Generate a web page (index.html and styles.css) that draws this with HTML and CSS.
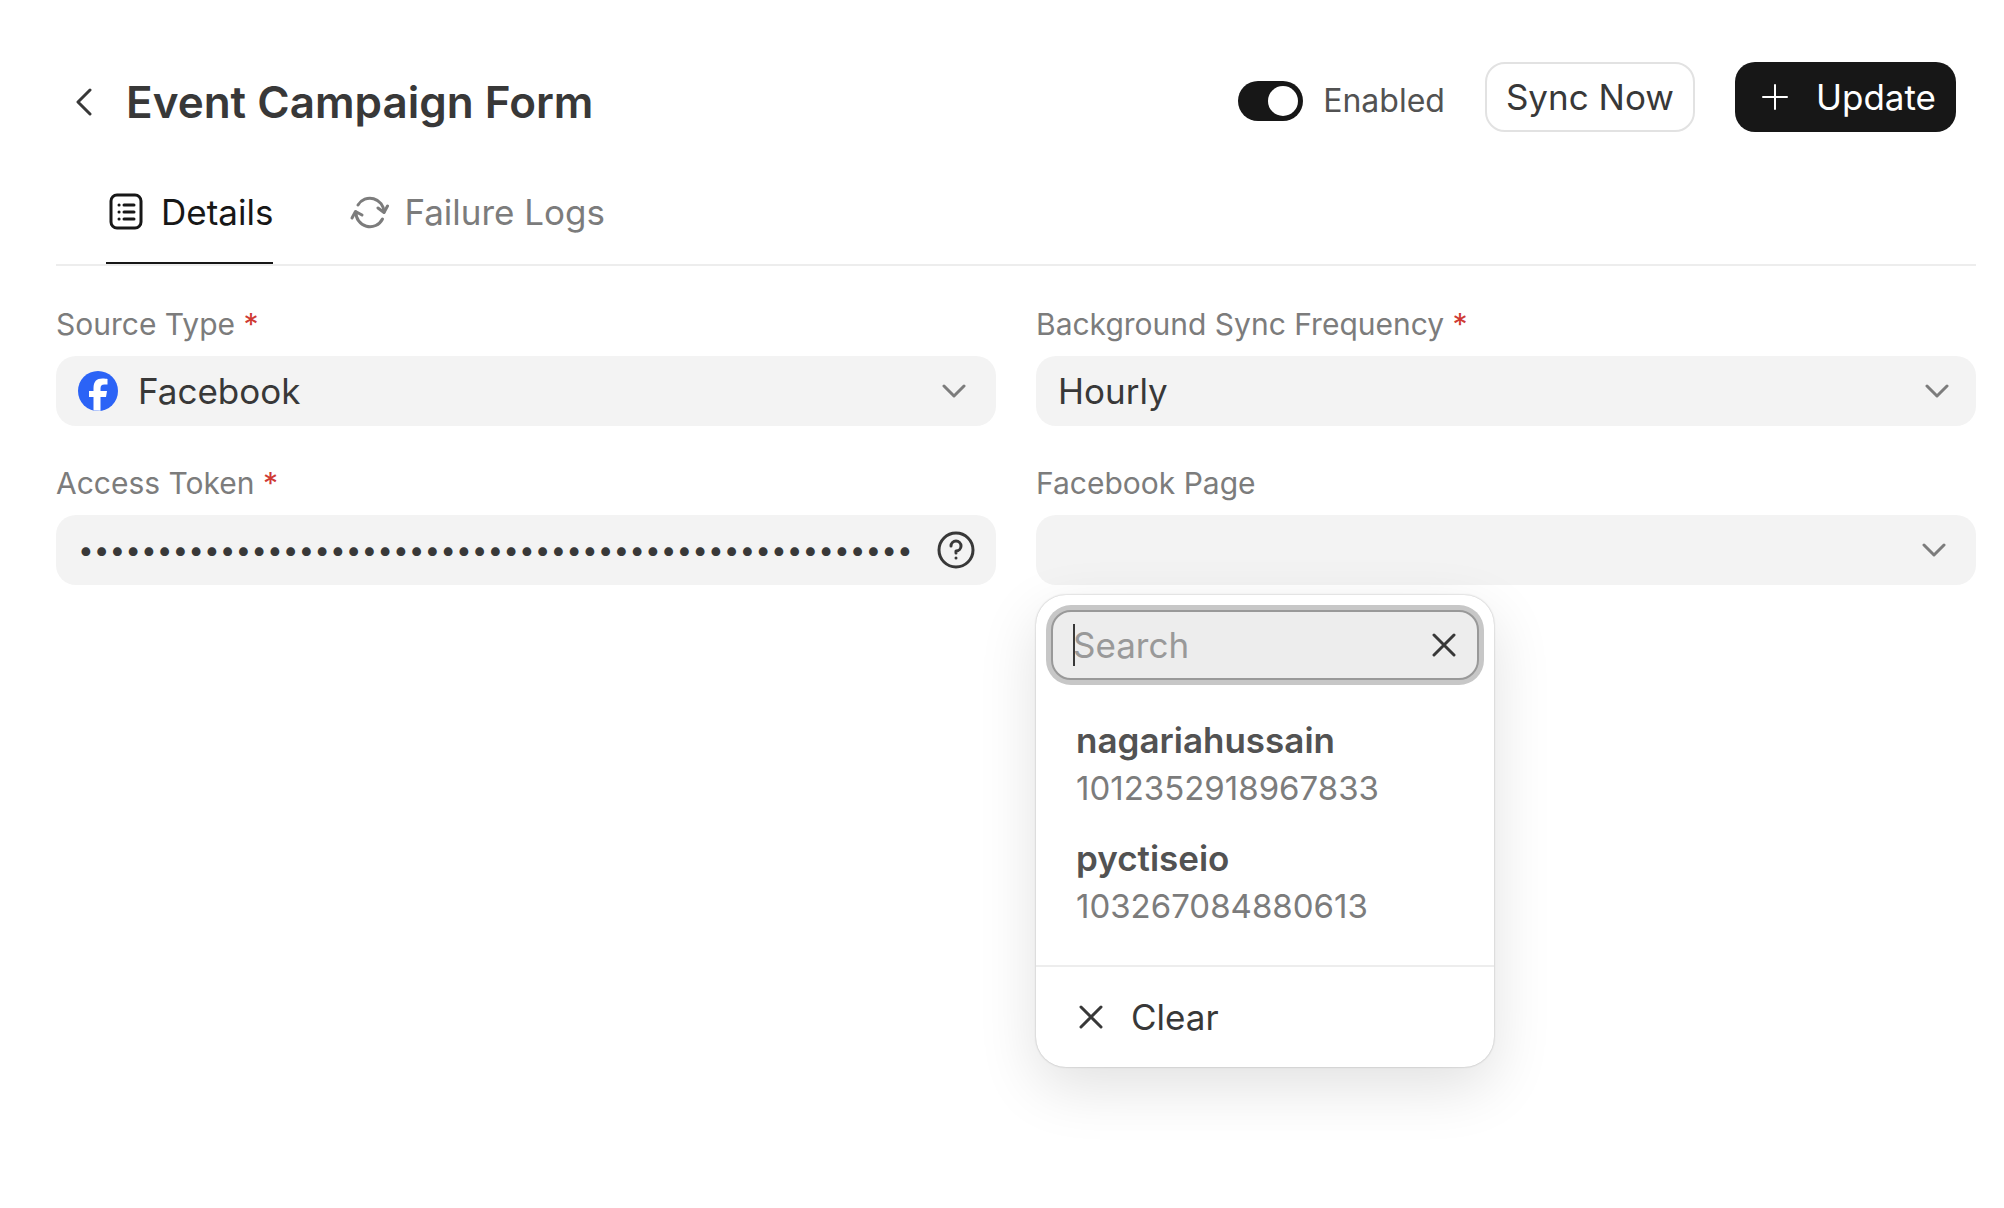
FILE: index.html
```html
<!DOCTYPE html>
<html lang="en">
<head>
    <meta charset="UTF-8">
    <meta name="viewport" content="width=device-width, initial-scale=1.0">
    <title>Event Campaign Form</title>
    <link rel="stylesheet" href="styles.css">
</head>
<body>
    <header class="page-header">
        <a class="back-link" href="#" aria-label="Back">
            <svg class="icon-back" viewBox="0 0 18 28"><path d="M16 2 L4 14 L16 26"/></svg>
        </a>
        <h1>Event Campaign Form</h1>
        <div class="actions">
            <label class="switch-label">
                <input class="switch" type="checkbox" role="switch" checked>
                Enabled
            </label>
            <button class="btn btn-outline" type="button">Sync Now</button>
            <button class="btn btn-solid" type="button">
                <svg class="icon-plus" viewBox="0 0 28 28"><path d="M14 2 V26 M2 14 H26"/></svg>
                Update
            </button>
        </div>
    </header>

    <nav class="tabs">
        <a class="tab active" href="#details">
            <svg class="icon-tab" viewBox="0 0 40 40">
                <rect x="5" y="3" width="30" height="33" rx="6"/>
                <path d="M18 13 H28 M18 20 H28 M18 27 H28"/>
                <path d="M13 13 H13.1 M13 20 H13.1 M13 27 H13.1"/>
            </svg>
            Details
        </a>
        <a class="tab" href="#failure-logs">
            <svg class="icon-tab" viewBox="0 0 40 40">
                <path d="M9 13 A14 14 0 0 1 35 20"/>
                <path d="M29 16 L35 20.500 L38.500 14"/>
                <path d="M33.500 27 A14 14 0 0 1 7 20"/>
                <path d="M3 26 L6.500 19.500 L13 23"/>
            </svg>
            Failure Logs
        </a>
    </nav>

    <form class="fields">
        <div class="field">
            <label for="source-type">Source Type <span class="required">*</span></label>
            <div class="control with-logo">
                <select id="source-type">
                    <option>Facebook</option>
                </select>
                <svg class="logo" viewBox="0 0 40 40">
                    <circle class="logo-disc" cx="20" cy="20" r="20"/>
                    <path class="logo-mark" d="M15.500 39.500 V26 H11 V20 H15.500 V17 C15.500 10.500 18.500 7.500 24.500 7.500 C26.500 7.500 28.500 7.700 29.500 8 V13.500 H26.500 C23.500 13.500 22.500 14.800 22.500 17.500 V20 H29 L28 26 H22.500 V39.800 Z"/>
                </svg>
                <svg class="chevron" viewBox="0 0 24 14"><path d="M2 2 L12 12 L22 2"/></svg>
            </div>
        </div>
        <div class="field">
            <label for="frequency">Background Sync Frequency <span class="required">*</span></label>
            <div class="control">
                <select id="frequency">
                    <option>Hourly</option>
                </select>
                <svg class="chevron" viewBox="0 0 24 14"><path d="M2 2 L12 12 L22 2"/></svg>
            </div>
        </div>
        <div class="field">
            <label for="token">Access Token <span class="required">*</span></label>
            <div class="token-box">
                <input id="token" type="password" autocomplete="off" value="0123456789012345678901234567890123456789012345678901234567890123456789">
                <button class="help-btn" type="button" aria-label="Help">
                    <svg class="icon-help" viewBox="0 0 40 40">
                        <circle cx="20" cy="20" r="17"/>
                        <path d="M15 16 A5 5 0 1 1 20 21 V23"/>
                        <path d="M20 28 V28.1"/>
                    </svg>
                </button>
            </div>
        </div>
        <div class="field">
            <label for="page-picker">Facebook Page</label>
            <button class="picker" id="page-picker" type="button" aria-haspopup="listbox" aria-expanded="true">
                <svg class="chevron" viewBox="0 0 24 14"><path d="M2 2 L12 12 L22 2"/></svg>
            </button>
            <div class="menu">
                <div class="search">
                    <input type="text" placeholder="Search" aria-label="Search">
                    <span class="caret"></span>
                    <button class="search-clear" type="button" aria-label="Clear search">
                        <svg class="icon-x" viewBox="0 0 24 24"><path d="M2 2 L22 22 M22 2 L2 22"/></svg>
                    </button>
                </div>
                <ul class="options" role="listbox">
                    <li role="option">
                        <span class="option-name">nagariahussain</span>
                        <span class="option-id">1012352918967833</span>
                    </li>
                    <li role="option">
                        <span class="option-name">pyctiseio</span>
                        <span class="option-id">103267084880613</span>
                    </li>
                </ul>
                <button class="menu-clear" type="button">
                    <svg class="icon-x" viewBox="0 0 24 24"><path d="M2 2 L22 22 M22 2 L2 22"/></svg>
                    Clear
                </button>
            </div>
        </div>
    </form>
</body>
</html>
```

FILE: styles.css
```css
* {
    box-sizing: border-box;
}

body {
    min-height: 100vh;
    margin: 0;
    padding: 62px 28px 40px 56px;
    background: #fff;
    color: #383838;
    font-family: 'Inter', 'Liberation Sans', sans-serif;
    font-optical-sizing: none;
    font-size: 35px;
    line-height: 40px;
}

button, input, select {
    margin: 0;
    padding: 0;
    border: none;
    background: none;
    color: inherit;
    font: inherit;
    font-optical-sizing: none;
}

button {
    cursor: pointer;
}

a {
    color: inherit;
    text-decoration: none;
}

svg {
    display: block;
    flex: none;
    fill: none;
    stroke: currentColor;
    stroke-width: 3;
    stroke-linecap: round;
    stroke-linejoin: round;
}

/* header */
.page-header {
    display: flex;
    align-items: center;
    padding: 0 20px 0 18px;
}

.back-link {
    padding: 10px 34px 0 0;
}

.icon-back {
    width: 18px;
    height: 28px;
}

h1 {
    margin: 0;
    padding-top: 10px;
    font-size: 44px;
    line-height: 52px;
    font-weight: 600;
}

.actions {
    display: flex;
    align-items: center;
    gap: 40px;
    margin-left: auto;
}

.switch-label {
    display: flex;
    align-items: center;
    gap: 20px;
    padding-top: 8px;
    color: #525252;
    font-size: 32px;
}

.switch {
    appearance: none;
    width: 65px;
    height: 40px;
    padding: 5px;
    border-radius: 20px;
    background: #171717;
}

.switch::before {
    content: "";
    display: block;
    width: 30px;
    height: 30px;
    margin-left: auto;
    border-radius: 50%;
    background: #fff;
}

.btn {
    display: flex;
    align-items: center;
    height: 70px;
    padding: 0 20px;
    border-radius: 20px;
}

.btn-outline {
    padding: 0 19px;
    border: 2px solid #e2e2e2;
}

.btn-solid {
    gap: 27px;
    background: #171717;
    color: #fff;
}

.icon-plus {
    width: 28px;
    height: 28px;
    margin-left: 6px;
    stroke-width: 2;
}

/* tabs */
.tabs {
    display: flex;
    gap: 76px;
    padding: 0 50px;
    border-bottom: 2px solid #ededed;
    margin-top: 40px;
}

.tab {
    display: flex;
    align-items: center;
    gap: 15px;
    height: 92px;
    padding-bottom: 10px;
    border-bottom: 2px solid transparent;
    color: #7c7c7c;
}

.tab.active {
    border-bottom-color: #171717;
    color: #171717;
}

.icon-tab {
    width: 40px;
    height: 40px;
}

/* form */
.fields {
    display: grid;
    grid-template-columns: 1fr 1fr;
    gap: 40px;
    margin-top: 41px;
}

.field {
    position: relative;
}

.field label {
    display: block;
    margin-bottom: 14px;
    color: #7c7c7c;
    font-size: 30px;
    line-height: 35px;
}

.required {
    color: #cf3a34;
}

.control {
    display: grid;
    align-items: center;
}

.control > * {
    grid-area: 1 / 1;
}

.control select {
    appearance: none;
    width: 100%;
    height: 70px;
    padding: 0 70px 0 22px;
    border-radius: 20px;
    background: #f3f3f3;
}

.with-logo select {
    padding-left: 82px;
}

.logo {
    width: 40px;
    height: 40px;
    margin-left: 22px;
    stroke: none;
    pointer-events: none;
}

.logo-disc {
    fill: #2b63f6;
}

.logo-mark {
    fill: #fff;
}

.chevron {
    width: 24px;
    height: 14px;
    margin-right: 27px;
    justify-self: end;
    color: #7c7c7c;
    pointer-events: none;
}

.with-logo .chevron, .picker .chevron {
    margin-right: 30px;
}

.token-box {
    display: flex;
    align-items: center;
    height: 70px;
    padding: 0 20px 0 22px;
    border-radius: 20px;
    background: #f3f3f3;
}

.token-box input {
    flex: 1;
    min-width: 0;
    outline: none;
    font-size: 28px;
}

.help-btn {
    margin-left: 22px;
}

.icon-help {
    width: 40px;
    height: 40px;
}

.picker {
    display: flex;
    align-items: center;
    justify-content: flex-end;
    width: 100%;
    height: 70px;
    border-radius: 20px;
    background: #f3f3f3;
}

/* open menu under the page picker */
.menu {
    position: absolute;
    top: 100%;
    left: 0;
    width: 458px;
    margin-top: 10px;
    border-radius: 30px;
    background: #fff;
    box-shadow: 0 0 2px rgba(0, 0, 0, 0.3), 0 20px 60px rgba(0, 0, 0, 0.12);
}

.search {
    position: relative;
    display: flex;
    align-items: center;
    height: 70px;
    margin: 15px;
    padding: 0 21px 0 20px;
    border: 2px solid #999;
    border-radius: 20px;
    background: #ededed;
    box-shadow: 0 0 0 5px #c7c7c7;
}

.search input {
    flex: 1;
    min-width: 0;
    outline: none;
}

.search input::placeholder {
    color: #999;
}

.caret {
    position: absolute;
    left: 20px;
    width: 2px;
    height: 42px;
    background: #383838;
}

.icon-x {
    width: 24px;
    height: 24px;
}

.options {
    margin: 0;
    padding: 25px 40px 9px;
    list-style: none;
}

.options li {
    display: flex;
    flex-direction: column;
    gap: 8px;
    padding-bottom: 30px;
}

.option-name {
    color: #525252;
    font-weight: 600;
}

.option-id {
    color: #7c7c7c;
    font-size: 33px;
}

.menu-clear {
    display: flex;
    align-items: center;
    gap: 28px;
    width: 100%;
    height: 102px;
    padding: 0 43px;
    border-top: 2px solid #ededed;
}
```
